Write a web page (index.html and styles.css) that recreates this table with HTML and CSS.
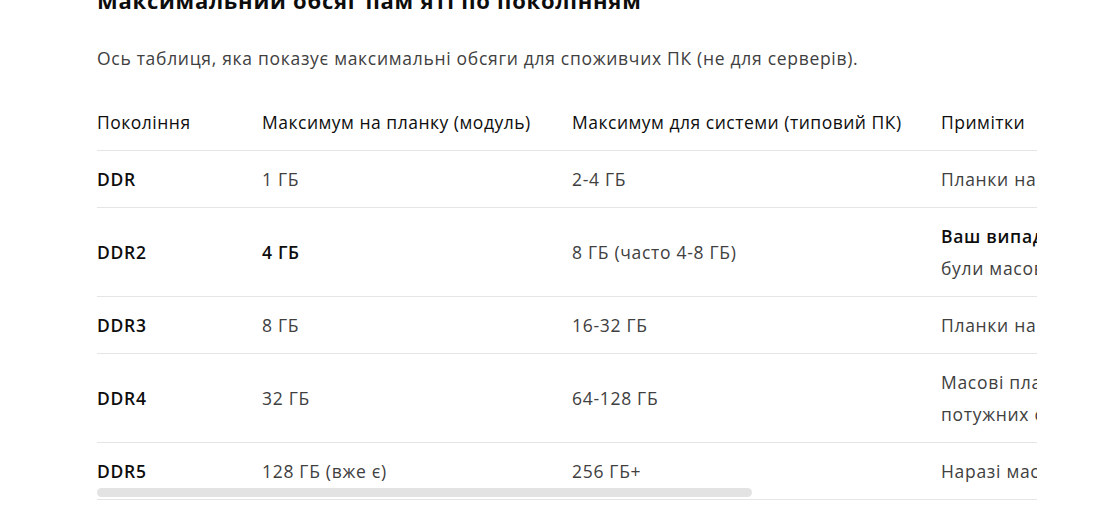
FILE: index.html
```html
<!DOCTYPE html>
<html lang="uk">
<head>
    <meta charset="UTF-8">
    <meta name="viewport" content="width=device-width, initial-scale=1.0">
    <title>Обсяг пам'яті по поколіннях</title>
    <link rel="stylesheet" href="styles.css">
</head>
<body>
    <div class="message">
        <h3 class="section-title">Максимальний обсяг пам'яті по поколінням</h3>
        <p class="lead">Ось таблиця, яка показує максимальні обсяги для споживчих ПК (не для серверів).</p>

        <div class="table-wrap">
            <div class="table-scroll">
                <table class="ram-table">
                    <colgroup>
                        <col class="col-gen">
                        <col class="col-module">
                        <col class="col-system">
                        <col class="col-notes">
                    </colgroup>
                    <thead>
                        <tr>
                            <th>Покоління</th>
                            <th>Максимум на планку (модуль)</th>
                            <th>Максимум для системи (типовий ПК)</th>
                            <th>Примітки</th>
                        </tr>
                    </thead>
                    <tbody>
                        <tr>
                            <td><strong>DDR</strong></td>
                            <td>1 ГБ</td>
                            <td>2-4 ГБ</td>
                            <td>Планки на 1 ГБ були рідкісними та дорогими.</td>
                        </tr>
                        <tr>
                            <td><strong>DDR2</strong></td>
                            <td><strong>4 ГБ</strong></td>
                            <td>8 ГБ (часто 4-8 ГБ)</td>
                            <td><strong>Ваш випадок.</strong> Планки по 4 ГБ існували, але не<br>були масовими, частіше 1-2 ГБ.</td>
                        </tr>
                        <tr>
                            <td><strong>DDR3</strong></td>
                            <td>8 ГБ</td>
                            <td>16-32 ГБ</td>
                            <td>Планки на 4 та 8 ГБ стали стандартом.</td>
                        </tr>
                        <tr>
                            <td><strong>DDR4</strong></td>
                            <td>32 ГБ</td>
                            <td>64-128 ГБ</td>
                            <td>Масові планки 8-16 ГБ, 32 ГБ у<br>потужних системах.</td>
                        </tr>
                        <tr>
                            <td><strong>DDR5</strong></td>
                            <td>128 ГБ (вже є)</td>
                            <td>256 ГБ+</td>
                            <td>Наразі масові планки 16-32 ГБ.</td>
                        </tr>
                    </tbody>
                </table>
            </div>
            <div class="scroll-thumb"></div>
        </div>
    </div>
</body>
</html>
```

FILE: styles.css
```css
body {
    margin: 0;
    padding: 0;
    background-color: #fff;
    font-family: "Open Sans", "Noto Sans", Arial, sans-serif;
    font-size: 17.5px;
    letter-spacing: 0.7px;
    color: #404040;
    overflow: hidden;
}
.message {
    width: 940px;
    margin-left: 97px;
}
.section-title {
    font-size: 22px;
    line-height: 28px;
    font-weight: 700;
    letter-spacing: 0.75px;
    color: #0d0d0d;
    margin: -14px 0 0 0;
}
.lead {
    margin: 30px 0 0 0;
    line-height: 28px;
}
.table-wrap {
    position: relative;
    margin-top: 22px;
}
.table-scroll {
    overflow: hidden;
}
.ram-table {
    width: 1349px;
    table-layout: fixed;
    border-collapse: collapse;
}
.col-gen { width: 165px; }
.col-module { width: 310px; }
.col-system { width: 369px; }
.col-notes { width: 505px; }
.ram-table th,
.ram-table td {
    text-align: left;
    vertical-align: middle;
    padding: 12px 16px 12px 0;
    line-height: 32px;
    border-bottom: 1px solid #e5e5e5;
    white-space: nowrap;
}
.ram-table th {
    font-weight: 500;
    letter-spacing: 0.5px;
    color: #0d0d0d;
}
.ram-table strong {
    font-weight: 600;
    color: #0d0d0d;
}
.scroll-thumb {
    position: absolute;
    left: 0;
    bottom: 3px;
    width: 655px;
    height: 9px;
    border-radius: 5px;
    background-color: #e3e3e3;
}
```
